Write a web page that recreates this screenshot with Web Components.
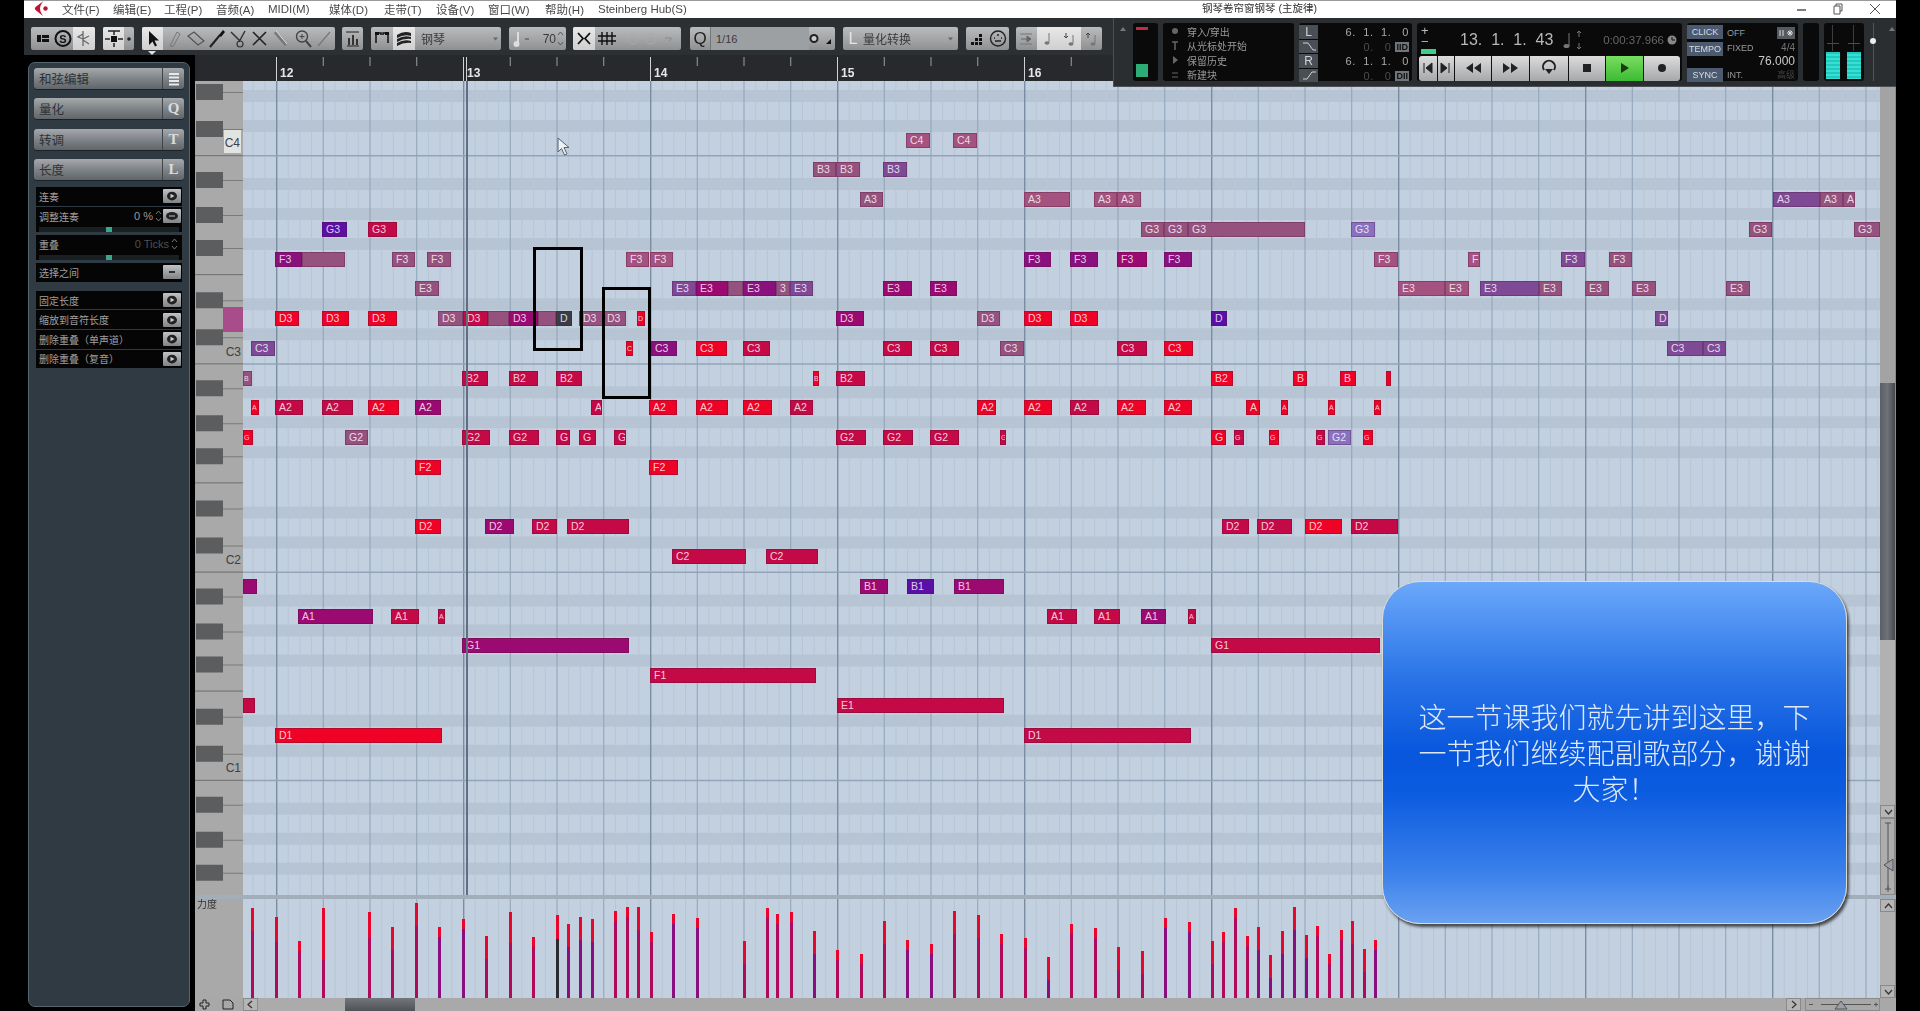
<!DOCTYPE html>
<html lang="zh">
<head>
<meta charset="utf-8">
<title>钢琴卷帘窗</title>
<style>
  html, body { margin: 0; height: 100%; background: #000; overflow: hidden; }
  body { font-family: "Liberation Sans", "Noto Sans CJK SC", sans-serif; }
</style>
</head>
<body>
<daw-window>
  <title-bar slot="title"></title-bar>
  <tool-bar slot="tools"></tool-bar>
  <transport-panel slot="transport"></transport-panel>
  <side-panel slot="side"></side-panel>
  <key-editor slot="editor"></key-editor>
</daw-window>
<call-out>这一节课我们就先讲到这里，下一节我们继续配副歌部分，谢谢大家！</call-out>

<script>
const FONT = '"Liberation Sans", "Noto Sans CJK SC", sans-serif';

// grid geometry, in page pixels
const GRID_X = 243, GRID_W = 1637, ROLL_Y = 81, ROLL_H = 814;
const BAR12 = 276, BEAT = 46.75, OCTAVE = 208.25;

class DawWindow extends HTMLElement {
  constructor() {
    super();
    this.attachShadow({ mode: 'open' }).innerHTML = `
      <style>
        :host {
          display: grid;
          width: 1872px;
          height: 1011px;
          margin-left: 24px;
          grid-template-columns: 171px 1fr;
          grid-template-rows: 18px 37px 1fr;
          filter: blur(.4px);
        }
        ::slotted([slot=title]) { grid-column: 1 / 3; grid-row: 1; }
        ::slotted([slot=tools]) { grid-column: 1 / 3; grid-row: 2; }
        ::slotted([slot=transport]) { grid-column: 1 / 3; grid-row: 2 / 4; justify-self: end; align-self: start; z-index: 5; position: relative; }
        ::slotted([slot=side]) { grid-column: 1; grid-row: 3; }
        ::slotted([slot=editor]) { grid-column: 2; grid-row: 3; }
      </style>
      <slot name="title"></slot><slot name="tools"></slot><slot name="side"></slot><slot name="editor"></slot><slot name="transport"></slot>`;
  }
}

class TitleBar extends HTMLElement {
  constructor() {
    super();
    const menus = [['文件(F)', 51], ['编辑(E)', 51], ['工程(P)', 52], ['音频(A)', 52], ['MIDI(M)', 61], ['媒体(D)', 55], ['走带(T)', 52], ['设备(V)', 52], ['窗口(W)', 57], ['帮助(H)', 53], ['Steinberg Hub(S)', 120]];
    this.attachShadow({ mode: 'open' }).innerHTML = `
      <style>
        :host { display: flex; align-items: center; height: 18px; box-sizing: border-box; padding-bottom: 2px; background: #fff; border-top: 1px solid #9a9a9a; font: 11.5px ${FONT}; color: #4a4a4a; position: relative; }
        .logo { width: 38px; padding-left: 10px; box-sizing: border-box; display: flex; }
        span { white-space: nowrap; }
        .title { position: absolute; left: 1178px; top: 0; font-size: 10.5px; line-height: 15px; color: #333; }
        .win { margin-left: auto; display: flex; gap: 26px; padding-right: 15px; align-items: center; }
        svg { display: block; }
      </style>
      <div class="logo"><svg width="15" height="15" viewBox="0 0 15 15"><path d="M9.500 0 L1.500 6 Q0 7.500 1.500 9 L9 15 Q6 10.500 6 7.500 Q6 4 9.500 0Z" fill="#c01235"/><circle cx="11.500" cy="7.500" r="2.200" fill="#c01235"/></svg></div>
      ${menus.map(m => `<span style="width:${m[1]}px">${m[0]}</span>`).join('')}
      <span class="title">钢琴卷帘窗钢琴 (主旋律)</span>
      <div class="win">
        <svg width="10" height="10"><path d="M0 6H9" stroke="#555" stroke-width="1.500"/></svg>
        <svg width="10" height="12"><path d="M1 3H7V11H1Z M3 3V1H9V8H7" fill="none" stroke="#555"/></svg>
        <svg width="12" height="12"><path d="M1 1L11 11M11 1L1 11" stroke="#555"/></svg>
      </div>`;
  }
}

// one cell of a toolbar group
function cell(w, inner, light) {
  return `<i class="c${light ? ' on' : ''}" style="width:${w}px"><svg width="${w}" height="23" viewBox="0 0 ${w} 23">${inner}</svg></i>`;
}
const caret = x => `<path d="M${x} 10.500h5l-2.500 3z" fill="#666"/>`;

class ToolBar extends HTMLElement {
  constructor() {
    super();
    const groups = [
      [64, cell(22, '<rect x="6" y="8" width="4" height="7" fill="#111"/><rect x="11" y="8" width="7" height="3" fill="#111"/><rect x="11" y="12" width="7" height="3" fill="#111"/>')
        + cell(20, '<circle cx="10" cy="11.500" r="7.500" fill="none" stroke="#111" stroke-width="2"/><text x="10" y="15.500" font-size="11" font-weight="700" text-anchor="middle" fill="#111">S</text>')
        + cell(22, '<path d="M10 4V19M10 7L5 10L10 12M10 12L16 9M10 13L16 17" fill="none" stroke="#666" stroke-width="1.300"/>', 1)],
      [31, cell(21, '<rect x="8" y="9" width="6" height="6" fill="#111"/><path d="M5 4H17M11 4V8M2 12H7M15 12H20M11 16V20" stroke="#222" stroke-width="1.500"/>', 1) + cell(10, '<circle cx="5" cy="12" r="1.800" fill="#222"/>')],
      [193, cell(21, '<path d="M7 4V18L10.500 14.500L13 19.500L15 18.500L12.500 13.500H17Z" fill="#111"/>', 1)
        + cell(21.5, '<path d="M7 19L14 5L17 7L10 19.500Z" fill="none" stroke="#777"/>')
        + cell(21.5, '<path d="M3 9L9 5L19 14L13 18Z" fill="none" stroke="#555" stroke-width="1.200"/>')
        + cell(21.5, '<path d="M4 20L14 8" stroke="#222" stroke-width="2"/><path d="M13 8L17 3L19 5L15 10Z" fill="#111"/>')
        + cell(21.5, '<path d="M3 5L12 14M17 4L11 15" stroke="#333" stroke-width="1.500"/><circle cx="12" cy="17" r="3" fill="none" stroke="#333" stroke-width="1.200"/>')
        + cell(21.5, '<path d="M4 5L17 18M17 5L4 18" stroke="#222" stroke-width="1.600"/>')
        + cell(21.5, '<path d="M4 5L15 18" stroke="#777" stroke-width="3"/><path d="M5 4L16 17" stroke="#ddd" stroke-width="1"/>')
        + cell(21.5, '<circle cx="10" cy="9.500" r="5.500" fill="none" stroke="#444" stroke-width="1.400"/><path d="M14 14L19 20" stroke="#444" stroke-width="2"/><path d="M7.500 9.500h5M10 7v5" stroke="#444"/>')
        + cell(20, '<path d="M4 19L16 5" stroke="#777" stroke-width="1.200"/>')],
      [21, cell(21, '<path d="M4 5H17M5 19H17" stroke="#222"/><path d="M6 18V11H8V18ZM10 18V8H12V18ZM14 18V12H16V18Z" fill="#333"/>')],
      [130, cell(22, '<path d="M5 16V6H10V8M12 8V6H17V16" fill="none" stroke="#111" stroke-width="1.500"/><rect x="4" y="5" width="4" height="3" fill="#111"/><rect x="14" y="5" width="4" height="3" fill="#111"/>')
        + cell(22, '<path d="M4 8Q11 3 18 6V9Q11 7 4 11ZM4 12Q11 8 18 10V12Q11 11 4 15ZM4 16Q11 12 18 14V16Q11 15 4 19Z" fill="#222"/>', 1)
        + `<b class="t" style="width:76px;padding-left:6px">钢琴</b>` + cell(10, caret(2))],
      [57, cell(22, '<path d="M9 5V16" stroke="#ddd" stroke-width="2"/><circle cx="7.500" cy="17" r="3" fill="#ddd"/><path d="M16 12h4" stroke="#666" stroke-width="1.500"/>')
        + `<b class="t" style="width:25px;justify-content:flex-end">70</b>` + cell(10, '<path d="M2 8L4.500 5L7 8M2 15L4.500 18L7 15" fill="none" stroke="#555"/>')],
      [108, cell(22, '<path d="M5 6L10 11.500L5 17M17 6L12 11.500L17 17" fill="none" stroke="#111" stroke-width="1.800"/>', 1)
        + cell(24, '<path d="M7 5V18M12 5V18M17 5V18M3 9H21M3 14H21" stroke="#111" stroke-width="1.400"/>')
        + cell(62, '<circle cx="14" cy="12" r="5" fill="none" stroke="#aaa"/><circle cx="32" cy="12" r="5" fill="none" stroke="#aaa"/><path d="M46 11h6M50 14l3-3" stroke="#888"/>')],
      [145, cell(20, '<text x="10" y="17" font-size="17" text-anchor="middle" fill="#222">Q</text>')
        + `<b class="t" style="width:99px;border-left:1px solid #777;padding-left:5px;background:#9da0a3;font-size:11px">1/16</b>`
        + cell(14, '<circle cx="5" cy="11.500" r="4.500" fill="#222"/><circle cx="5" cy="11.500" r="2.500" fill="#ccc"/>')
        + cell(12, '<path d="M8 17h-5l5 -5z" fill="#111"/>')],
      [115, cell(20, '<text x="10" y="17" font-size="16" text-anchor="middle" fill="#e4e4e4">L</text>') + `<b class="t" style="width:84px;font-size:12px">量化转换</b>` + cell(10, caret(1))],
      [43, cell(21, '<path d="M13 15h3v3h-3zM9 15h3v3h-3zM5 15h3v3h-3zM9 11h3v3h-3zM13 11h3v3h-3zM13 7h3v3h-3z" fill="#111"/>') + cell(22, '<circle cx="11" cy="11.500" r="7.500" fill="none" stroke="#222" stroke-width="1.400"/><path d="M7 11h1M10 8h2M14 11h1M8 14h6" stroke="#222" stroke-width="1.400"/>')],
      [86, cell(21, '<path d="M4 7h12M4 17h12" stroke="#777" stroke-width="1.200"/><path d="M5 12h8M11 9l4 3-4 3z" stroke="#666" fill="#666"/>')
        + cell(22, '<path d="M12 6V15" stroke="#777"/><ellipse cx="10" cy="16" rx="2.500" ry="1.800" fill="#777"/>', 1)
        + cell(22, '<path d="M14 8V16" stroke="#777"/><ellipse cx="12" cy="17" rx="2.500" ry="1.800" fill="#777"/><path d="M7 6v5M5 9l2 2 2-2" fill="none" stroke="#444"/>', 1)
        + cell(21, '<path d="M14 8V16" stroke="#777"/><ellipse cx="12" cy="17" rx="2.500" ry="1.800" fill="#777"/><path d="M7 11V6M5 8l2-2 2 2" fill="none" stroke="#444"/>')],
    ];
    const gaps = [8, 8, 7, 8, 8, 7, 9, 8, 8, 7];
    this.attachShadow({ mode: 'open' }).innerHTML = `
      <style>
        :host { display: flex; align-items: flex-start; box-sizing: border-box; height: 37px; padding: 9px 0 0 7px; background: #2d3033; font: 12px ${FONT}; position: relative; }
        .g { display: flex; height: 23px; border-radius: 2px; overflow: hidden; background: linear-gradient(#b9bbbd, #a2a4a6 55%, #8e9092); flex: none; }
        .c { display: block; flex: none; font-style: normal; }
        .c.on { background: linear-gradient(#e8e8e8, #cfcfcf); }
        svg { display: block; font-family: ${FONT}; }
        .t { display: flex; align-items: center; box-sizing: border-box; flex: none; font-weight: 400; color: #3a3a3a; white-space: nowrap; }
        .mark { position: absolute; left: 124px; top: 33px; width: 0; height: 0; border: 4px solid transparent; border-top: 4px solid #ddd; border-bottom: 0; }
      </style>
      ${groups.map((g, i) => `<div class="g" style="width:${g[0]}px;margin-right:${gaps[i] || 0}px">${g[1]}</div>`).join('')}
      <div class="mark"></div>`;
  }
}

class TransportPanel extends HTMLElement {
  constructor() {
    super();
    const play = [
      [18, '<path d="M5 7V17M13 7V17L7 12Z" stroke="#222" fill="#222"/>'],
      [16, '<path d="M3 7L9 12L3 17ZM11 7V17" stroke="#222" fill="#222"/>'],
      [36, '<path d="M18 7V17L11 12ZM26 7V17L19 12Z" fill="#222"/>'],
      [37, '<path d="M11 7V17L18 12ZM19 7V17L26 12Z" fill="#222"/>'],
      [38, '<path d="M14 14A6 6 0 1 1 24 14" fill="none" stroke="#222" stroke-width="2"/><path d="M15 13H23L19 18Z" fill="#222"/>'],
      [36, '<rect x="14" y="8" width="8" height="8" fill="#222"/>'],
      [37, '<path d="M15 7L23 12L15 17Z" fill="#1a3a12"/>', 1],
      [36, '<circle cx="18" cy="12" r="4" fill="#222"/>'],
    ];
    const upArrow = '<svg width="10" height="8"><path d="M2 6L5 2L8 6Z" fill="#777"/></svg>';
    const modeIcon = d => `<svg width="24" height="14">${d}</svg>`;
    this.attachShadow({ mode: 'open' }).innerHTML = `
      <style>
        :host { display: flex; box-sizing: border-box; width: 783px; height: 69px; padding: 5px 0 5px 4px; gap: 5px; background: #2b2e31; border-left: 1px solid #4c5054; border-bottom: 1px solid #4c5054; font: 10px ${FONT}; color: #999; }
        .box { background: #0a0a0b; border-radius: 3px; box-sizing: border-box; flex: none; }
        .up { width: 10px; flex: none; padding-top: 2px; }
        .meter { width: 25px; padding: 4px 3px; display: flex; flex-direction: column; justify-content: space-between; }
        .meter u { display: block; width: 12px; background: #c42a44; height: 3px; }
        .meter u + u { height: 13px; background: #2eac78; }
        .modes { width: 131px; display: grid; grid-template-columns: 24px 1fr; grid-auto-rows: 14.5px; align-items: center; padding-top: 1px; }
        .loc { width: 113px; display: grid; grid-template-columns: 19px 1fr; grid-auto-rows: 14.5px; padding-top: 2px; }
        .loc b { font-weight: 400; display: flex; align-items: center; justify-content: center; background: #4a4f55; color: #cfd3d6; margin: 0 0 1px; font-size: 12px; }
        .loc span { display: flex; justify-content: flex-end; align-items: center; padding-right: 3px; color: #aaa; font-size: 11px; white-space: pre; letter-spacing: .6px; }
        .loc .dim { color: #4c4c4c; }
        .loc .dim i { font-style: normal; font-size: 9px; font-weight: 700; background: #70757a; color: #111; padding: 0 1px; margin-left: 4px; letter-spacing: 0; }
        .time { width: 265px; display: flex; flex-direction: column; }
        .clock { height: 33px; display: flex; align-items: center; color: #b8b8b8; position: relative; }
        .pm { width: 24px; padding-left: 4px; font-size: 13px; line-height: 11px; color: #bbb; box-sizing: border-box; }
        .pm u { display: block; width: 15px; height: 5px; background: #3bd08a; margin-top: 2px; }
        .big { font-size: 16px; margin-left: 19px; white-space: pre; }
        .real { margin-left: auto; padding-right: 5px; font-size: 11.500px; color: #666; display: flex; gap: 3px; align-items: center; }
        .btns { display: flex; height: 25px; margin: 0 2px; background: #111; border-radius: 3px; overflow: hidden; gap: 1px; }
        .btns i { background: linear-gradient(#dcdcdc, #a6a8aa); display: block; }
        .btns i.go { background: linear-gradient(#79dd62, #3dbb33); }
        svg { display: block; }
        .sync { width: 111px; display: grid; grid-template-columns: 36px 1fr; grid-template-rows: 17px 13px 13px 15px; padding: 1px 0; font-size: 9px; }
        .sync b { font-weight: 400; background: #4c5a70; color: #d8dde2; display: flex; align-items: center; justify-content: center; height: 14px; margin-top: 1px; }
        .sync span { padding-left: 4px; display: flex; align-items: center; color: #999; }
        .sync .r { justify-content: flex-end; padding-right: 3px; }
        .empty { width: 16px; }
        .vu { width: 40px; display: flex; justify-content: center; gap: 7px; padding: 0 2px 2px 0; background: #0a0a0b; }
        .vu div { width: 14px; display: flex; flex-direction: column; justify-content: flex-end; position: relative; }
        .vu div::before { content: ""; position: absolute; left: 6px; top: 2px; bottom: 28px; width: 1px; background: #3a3e42; }
        .vu div::after { content: ""; position: absolute; left: 1px; right: 1px; top: 20px; height: 1px; background: #4a4e52; }
        .vu u { display: block; height: 27px; background: repeating-linear-gradient(#1fc9c0 0 2px, #36dfd2 2px 4px); }
        .fader { width: 8px; flex: none; position: relative; display: flex; justify-content: center; }
        .fader::before { content: ""; width: 1px; background: #555; }
        .fader::after { content: ""; position: absolute; top: 15px; width: 6px; height: 6px; border-radius: 50%; background: #eee; }
        .top { margin-left: 5px; }
      </style>
      <div class="up">${upArrow}</div>
      <div class="box meter"><u></u><u></u></div>
      <div class="box modes">
        ${modeIcon('<circle cx="12" cy="7" r="3" fill="#666"/>')}<span>穿入/穿出</span>
        ${modeIcon('<path d="M9 3H15M12 3V11" stroke="#666" stroke-width="1.500"/>')}<span>从光标处开始</span>
        ${modeIcon('<path d="M10 3L15 7L10 11Z" fill="#666"/>')}<span>保留历史</span>
        ${modeIcon('<path d="M9 5H15M9 9H15" stroke="#666"/>')}<span>新建块</span>
      </div>
      <div class="box loc">
        <b>L</b><span>6.  1.  1.   0</span>
        <b><svg width="16" height="12"><path d="M2 3H7L12 10H15" fill="none" stroke="#cfd3d6"/></svg></b><span class="dim">0.   0<i>IID</i></span>
        <b>R</b><span>6.  1.  1.   0</span>
        <b><svg width="16" height="12"><path d="M2 10H6L11 3H15" fill="none" stroke="#cfd3d6"/></svg></b><span class="dim">0.   0<i>DII</i></span>
      </div>
      <div class="box time">
        <div class="clock">
          <div class="pm">+<br>−<u></u></div>
          <span class="big">13.  1.  1.  43</span>
          <svg width="28" height="24" style="margin-left:5px"><path d="M11 5V18" stroke="#777"/><ellipse cx="8.500" cy="18" rx="3" ry="2" fill="#777"/><path d="M21 3V9M21 15V21M19 5l2-2 2 2M19 19l2 2 2-2" fill="none" stroke="#777"/></svg>
          <span class="real">0:00:37.966 <svg width="10" height="10"><circle cx="5" cy="5" r="4.500" fill="#888"/><path d="M5 2V5H8" stroke="#111" fill="none"/></svg></span>
        </div>
        <div class="btns">${play.map(p => `<i class="${p[2] ? 'go' : ''}" style="width:${p[0]}px"><svg width="${p[0]}" height="25" viewBox="0 0 ${p[0]} 25">${p[1]}</svg></i>`).join('')}</div>
      </div>
      <div class="box sync">
        <b>CLICK</b><span style="justify-content:space-between;padding-right:3px">OFF<svg width="18" height="12"><rect width="18" height="12" fill="#555a60"/><path d="M3 3V9M6 3V9M10 6H16M13 3V9M11 4L15 8M15 4L11 8" stroke="#ddd"/></svg></span>
        <b>TEMPO</b><span style="justify-content:space-between;padding-right:3px">FIXED<i style="font-style:normal;color:#777;font-size:10px">4/4</i></span>
        <i></i><span class="r" style="color:#c8c8c8;font-size:12px">76.000</span>
        <b>SYNC</b><span style="justify-content:space-between;padding-right:3px">INT.<i style="font-style:normal;color:#444">高级</i></span>
      </div>
      <div class="box empty"></div>
      <div class="box vu"><div><u></u></div><div><u></u></div></div>
      <div class="fader"></div>
      <div class="up top">${upArrow}</div>`;
  }
}

class SideButton extends HTMLElement {
  constructor() {
    super();
    const key = this.getAttribute('key');
    const stack = '<svg width="12" height="14"><path d="M1 2H11M1 5.500H11M1 9H11M1 12.500H11" stroke="#e6e8ea" stroke-width="2"/></svg>';
    this.attachShadow({ mode: 'open' }).innerHTML = `
      <style>
        :host { display: flex; height: 21px; margin-bottom: 9.250px; border-radius: 3px; overflow: hidden; background: linear-gradient(#a5a9ac, #7f8488 50%, #60656a); color: #2d3135; font-size: 12.500px; box-shadow: 0 1px 0 #1c2125; }
        div { flex: 1; display: flex; align-items: center; padding-left: 5px; }
        b { width: 21px; border-left: 1px solid #3f4448; display: flex; align-items: center; justify-content: center; font: 700 15px "Liberation Serif", serif; color: #d9dcde; }
      </style>
      <div><slot></slot></div><b>${key || stack}</b>`;
  }
}

class SideRow extends HTMLElement {
  constructor() {
    super();
    const btn = this.getAttribute('btn');
    const glyph = btn === 'minus' ? '<rect x="6" y="7" width="6" height="2" fill="#222"/>'
      : btn === 'plus' ? '<ellipse cx="9" cy="8" rx="6" ry="4.500" fill="#222"/><path d="M6 8H12" stroke="#ccc"/>'
      : '<circle cx="9" cy="8" r="5" fill="#222"/><path d="M7.500 5.500L11.500 8L7.500 10.500Z" fill="#ccc"/>';
    const val = this.getAttribute('val');
    const slider = this.hasAttribute('slider');
    this.attachShadow({ mode: 'open' }).innerHTML = `
      <style>
        :host { display: block; background: #050505; color: #a0a0a0; font-size: 10px; margin-bottom: 1px; position: relative; }
        .line { display: flex; align-items: center; height: var(--row, 19px); padding-left: 3px; }
        .label { flex: 1; white-space: nowrap; }
        .val { color: ${btn ? '#9a9a9a' : '#505050'}; font-size: 11px; margin-right: 1px; white-space: nowrap; }
        .btn { width: 18px; height: 14px; margin-right: 1px; background: linear-gradient(#c0c2c4, #808487); border-radius: 1px; }
        .btn.none { width: 2px; background: none; }
        svg { display: block; }
        .slide { height: 5px; margin: 1px 3px 3px; background: #1a2022; display: flex; justify-content: center; }
        .slide u { display: block; width: 6px; background: #3da58a; }
      </style>
      <div class="line"><span class="label"><slot></slot></span>
        ${val ? `<span class="val">${val}</span><svg width="9" height="14"><path d="M2 5L4.500 2L7 5M2 9L4.500 12L7 9" fill="none" stroke="#777"/></svg>` : ''}
        <div class="btn ${btn ? '' : 'none'}">${btn ? `<svg width="18" height="14" viewBox="0 0 18 16" preserveAspectRatio="none">${glyph}</svg>` : ''}</div>
      </div>
      ${slider ? '<div class="slide"><u></u></div>' : ''}`;
  }
}

class SidePanel extends HTMLElement {
  constructor() {
    super();
    this.attachShadow({ mode: 'open' }).innerHTML = `
      <style>
        :host { display: block; box-sizing: border-box; height: 956px; padding: 7px 5px 4px 4px; background: #000; font: 10px ${FONT}; }
        .panel { box-sizing: border-box; height: 100%; padding: 5px 5px 0; background: #2f3a42; border: 1px solid #56656e; border-radius: 7px; }
        .block { margin: 0 2px; }
        .block + .block { margin-top: 9px; --row: 18.6px; }
        side-button:nth-of-type(4) { margin-bottom: 7px; }
      </style>
      <div class="panel">
        <side-button>和弦编辑</side-button>
        <side-button key="Q">量化</side-button>
        <side-button key="T">转调</side-button>
        <side-button key="L">长度</side-button>
        <div class="block">
          <side-row btn="play">连奏</side-row>
          <side-row btn="plus" val="0 %" slider>调整连奏</side-row>
          <side-row val="0 Ticks" slider>重叠</side-row>
          <side-row btn="minus">选择之间</side-row>
        </div>
        <div class="block">
          <side-row btn="play">固定长度</side-row>
          <side-row btn="play">缩放到音符长度</side-row>
          <side-row btn="play">删除重叠（单声道）</side-row>
          <side-row btn="play">删除重叠（复音）</side-row>
        </div>
      </div>`;
  }
}

// vertical grid lines shared by the note area and the velocity lane
function gridLines(h) {
  let out = '';
  for (let x = BAR12 - GRID_X - BEAT; x < GRID_W; x += BEAT / 4) {
    const i = Math.round((x - (BAR12 - GRID_X)) / (BEAT / 4));
    const bar = ((i % 16) + 16) % 16 === 0, beat = ((i % 4) + 4) % 4 === 0;
    if (x < 0) continue;
    const col = bar ? '#7a8da3' : beat ? '#8fa1b5' : '#b7c5d5';
    out += `<rect x="${x.toFixed(2)}" y="0" width="${bar ? 1.4 : 1}" height="${h}" fill="${col}"/>`;
  }
  return out;
}

const NOTE_COL = {
  r: '#ee0226', c: '#c40a46', m: '#9b0a70', p: '#8a107e', v: '#5c0fa4',
  u: '#96527f', q: '#a4527f', w: '#7e4a96', l: '#8a70c0', k: '#3b3d45',
};
const ROW_NAMES = ['C4', 'B3', 'A3', 'G3', 'F3', 'E3', 'D3', 'C3', 'B2', 'A2', 'G2', 'F2', 'E2', 'D2', 'C2', 'B1', 'A1', 'G1', 'F1', 'E1', 'D1'];
// start-end + colour; "_" means no label, "~" shows only the octave digit
const NOTES = [
  '906-930q 953-977q',
  '813-836u 836-860u 883-907w',
  '860-883u 1024-1070q 1094-1117q 1117-1141q 1773-1820w 1820-1843u 1843-1855u',
  '322-347v 368-397c 1141-1164u 1164-1188u 1188-1305u 1351-1375l 1749-1772u 1854-1880u',
  '275-302p 302-345u_ 392-415u 427-451u 626-649q 650-673q 1024-1051p 1070-1098p 1117-1147m 1164-1192p 1374-1398q 1468-1480q 1561-1585w 1609-1632u',
  '415-439u 672-696w 696-728m 728-743u_ 743-776p 776-790u~ 790-813w 883-912m 930-957m 1398-1445q 1445-1469q 1480-1539w 1539-1562u 1585-1609u 1632-1656u 1726-1750u',
  '275-299r 322-349r 368-397r 438-463u 463-488c 488-509u_ 509-538m 538-556u_ 556-572k 579-603u 603-626u 637-645r 836-864m 977-1000u 1024-1052r 1070-1098r 1211-1227v 1655-1668w',
  '251-275w 626-633r 651-677p 696-727r 743-770c 883-912c 930-959c 1000-1024u 1117-1147c 1164-1193r 1667-1703w 1703-1726w',
  '243-252u 462-488c 509-538c 556-582c 813-819r 836-865c 1211-1233r 1293-1307r 1340-1356r 1386-1391r',
  '251-259r 275-303c 322-353c 368-399r 415-441m 591-602c 649-677r 696-728r 743-772r 790-813c 977-996r 1024-1052r 1070-1099c 1117-1146r 1164-1192r 1246-1260r 1281-1288r 1328-1335r 1374-1381r',
  '243-253r 345-368u 462-490c 509-539c 556-570c 579-596c 614-626c 836-866c 883-913c 930-959c 1000-1006c 1211-1226r 1234-1244c 1269-1279r 1316-1325c 1328-1351l 1363-1373r',
  '415-441r 649-678r',
  '',
  '415-441r 485-514m 532-557c 567-629c 1222-1249c 1257-1292c 1305-1342r 1351-1398c',
  '672-746c 766-818c',
  '243-257m_ 860-888m 907-934v 954-1004m',
  '298-373m 391-419c 438-445c 1047-1077c 1094-1120c 1141-1166m 1188-1196c',
  '462-629m 1211-1380c',
  '650-816c',
  '243-255c_ 837-1004c',
  '275-442r 1024-1191c',
];

class NoteBlock extends HTMLElement {
  constructor() {
    super();
    const c = NOTE_COL[this.getAttribute('c')];
    const tiny = this.hasAttribute('tiny');
    this.attachShadow({ mode: 'open' }).innerHTML = `
      <style>
        :host { display: block; position: absolute; box-sizing: border-box; height: 15px; overflow: hidden; padding-left: ${tiny ? 0 : 3}px; background: ${c}; border: 1px solid rgba(70,20,50,.3); font: ${tiny ? 7 : 10.5}px/13px "Liberation Sans", sans-serif; color: rgba(255,255,255,.8); white-space: nowrap; }
      </style><slot></slot>`;
  }
}

// what fits of a note's name in a block of this width
function noteLabel(name, w, flag) {
  if (flag === '_') return '';
  if (flag === '~') return name[1];
  if (w >= 18) return name;
  return w >= 6 ? name[0] : '';
}

class NoteGrid extends HTMLElement {
  constructor() {
    super();
    let bands = '', lines = '';
    for (let k = -1; k < 5; k++) {
      for (const y of [96, 126, 184, 214, 244]) {
        bands += `<rect x="0" y="${y + k * OCTAVE - ROLL_Y - 6}" width="${GRID_W}" height="12" fill="#b7c4d4"/>`;
      }
      lines += `<rect x="0" y="${155 + k * OCTAVE - ROLL_Y}" width="${GRID_W}" height="1.500" fill="#93a4b8"/>`;
    }
    let notes = '';
    NOTES.forEach((row, n) => {
      row.split(' ').filter(Boolean).forEach(tok => {
        const m = tok.match(/(\d+)-(\d+)([a-z])([_~]?)/);
        const left = m[1] - GRID_X, w = m[2] - m[1], top = 140 + n * 29.75 - 7.5 - ROLL_Y;
        notes += `<note-block c="${m[3]}" ${w < 11 ? 'tiny' : ''} style="left:${left}px;top:${top}px;width:${w}px">${noteLabel(ROW_NAMES[n], w, m[4])}</note-block>`;
      });
    });
    this.attachShadow({ mode: 'open' }).innerHTML = `
      <style>
        :host { display: block; position: relative; width: ${GRID_W}px; height: ${ROLL_H}px; overflow: hidden; background: #c3d0e0; }
        svg { display: block; position: absolute; left: 0; top: 0; }
        .head { position: absolute; top: 0; bottom: 0; width: 1.500px; background: #5f6f80; }
        .mark { position: absolute; box-sizing: border-box; border: 3px solid #000; }
      </style>
      <svg width="${GRID_W}" height="${ROLL_H}">${bands}${gridLines(ROLL_H)}${lines}</svg>
      ${notes}
      <div class="head" style="left:${466 - GRID_X}px"></div>
      <div class="mark" style="left:${533 - GRID_X}px;top:${247 - ROLL_Y}px;width:50px;height:104px"></div>
      <div class="mark" style="left:${602 - GRID_X}px;top:${287 - ROLL_Y}px;width:49px;height:112px"></div>
      <svg style="left:${557 - GRID_X}px;top:${137 - ROLL_Y}px" width="14" height="20" viewBox="0 0 14 20"><path d="M1 1V15L4.500 11.500L7.500 18L10 17L7 10.500H12Z" fill="#eef1f5" stroke="#59616b"/></svg>`;
  }
}

class PianoKeys extends HTMLElement {
  constructor() {
    super();
    let out = '';
    for (let k = -1; k < 5; k++) {
      for (const y of [92, 129, 180, 215, 248]) {
        const c = y + k * OCTAVE;
        out += `<rect x="28" y="${c - ROLL_Y}" width="20" height="1" fill="#7b7b7b"/><rect x="1" y="${c - 8 - ROLL_Y}" width="27" height="16" fill="#5c5d5f"/>`;
      }
      out += `<rect x="0" y="${155 + k * OCTAVE - ROLL_Y}" width="48" height="1.200" fill="#777"/><rect x="0" y="${274 + k * OCTAVE - ROLL_Y}" width="48" height="1.200" fill="#777"/>`;
    }
    this.attachShadow({ mode: 'open' }).innerHTML = `
      <style>
        :host { display: block; position: relative; width: 48px; height: ${ROLL_H}px; overflow: hidden; background: #a9a9a9; }
        svg { display: block; }
        .sel { position: absolute; left: 28px; top: ${307 - ROLL_Y}px; width: 20px; height: 25px; background: #a84d8a; }
        .lab { position: absolute; right: 2px; font: 12px/14px ${FONT}; color: #3d4045; }
        .c4 { top: ${130 - ROLL_Y}px; padding: 6px 1px 3px; background: #e2e4e2; }
      </style>
      <svg width="48" height="${ROLL_H}">${out}</svg>
      <div class="sel"></div>
      <span class="lab c4">C4</span>
      <span class="lab" style="top:${345 - ROLL_Y}px">C3</span>
      <span class="lab" style="top:${553 - ROLL_Y}px">C2</span>
      <span class="lab" style="top:${761 - ROLL_Y}px">C1</span>`;
  }
}

class VelocityLane extends HTMLElement {
  constructor() {
    super();
    // tops read off the left part of the lane, the rest are scattered alike
    const known = { 251: 908, 275: 917, 298: 941, 322: 908, 368: 912, 391: 927, 415: 903, 438: 927, 462: 919, 485: 936, 509: 912, 532: 937, 556: 915, 567: 924, 579: 917, 591: 919, 614: 911, 626: 907, 637: 907 };
    const mid = { 275: 942, 322: 960, 368: 938, 509: 943, 556: 939 };
    const xs = new Set(Object.keys(known).map(Number));
    NOTES.forEach(r => r.split(' ').filter(Boolean).forEach(t => {
      const x = parseInt(t);
      if (x >= 649 && x < 1385 && !t.includes('_') && ![...xs].some(o => Math.abs(o - x) < 5)) xs.add(x);
    }));
    let bars = '';
    [...xs].sort((a, b) => a - b).forEach(x => {
      const top = known[x] || 906 + (x * 37) % 52;
      const split = mid[x] || top + 10 + (x * 13) % 26;
      const low = x === 556 ? '#2a2a30' : x % 3 === 0 ? '#8a0f7e' : '#b00a5c';
      bars += `<rect x="${x - GRID_X}" y="${top - 899}" width="3" height="${split - top}" fill="#e8062c"/><rect x="${x - GRID_X}" y="${split - 899}" width="3" height="${998 - split}" fill="${low}"/>`;
    });
    this.attachShadow({ mode: 'open' }).innerHTML = `
      <style>
        :host { display: flex; height: 99px; }
        .name { width: 48px; box-sizing: border-box; padding-left: 2px; background: #a9a9a9; font: 10px/11px ${FONT}; color: #333; }
        svg { display: block; background: #c3d0e0; }
      </style>
      <div class="name">力度</div>
      <svg width="${GRID_W}" height="99">${gridLines(99)}${bars}</svg>`;
  }
}

class ScrollColumn extends HTMLElement {
  constructor() {
    super();
    const lane = this.hasAttribute('lane');
    const arrow = d => `<svg width="15" height="13"><path d="${d}" fill="none" stroke="#333" stroke-width="1.200"/></svg>`;
    this.attachShadow({ mode: 'open' }).innerHTML = `
      <style>
        :host { display: flex; flex-direction: column; width: 16px; flex: none; background: #a8a8a8; box-sizing: border-box; border-right: 1px solid #8a8a8a; }
        .btn { height: 13px; background: #b5b5b5; border: 1px solid #8a8a8a; box-sizing: border-box; flex: none; }
        svg { display: block; }
        .a { height: 302px; background: #a3a3a3; flex: none; }
        .th { height: 257px; background: linear-gradient(90deg, #5c6066, #6f7379 50%, #45494e); flex: none; }
        .tr { flex: 1; background: #b1b1b1; }
        .zoom { height: 77px; flex: none; background: #adadad; border: 1px solid #8a8a8a; box-sizing: border-box; }
      </style>
      ${lane
        ? `<div class="btn">${arrow('M4 8L7.500 4L11 8')}</div><div class="tr"></div><div class="btn">${arrow('M4 4L7.500 8L11 4')}</div>`
        : `<div class="a"></div><div class="th"></div><div class="tr"></div><div class="btn">${arrow('M4 4L7.500 8L11 4')}</div>
           <div class="zoom"><svg width="14" height="75"><path d="M4 4H10M7 4V70M4 70H10M7 67V73" stroke="#555"/><path d="M3 46L12 40V52Z" fill="#9aa0a5" stroke="#555"/></svg></div>`}`;
  }
}

class BottomBar extends HTMLElement {
  constructor() {
    super();
    this.attachShadow({ mode: 'open' }).innerHTML = `
      <style>
        :host { display: flex; height: 13px; background: #a8a8a8; }
        .ic { width: 48px; display: flex; gap: 12px; padding-left: 4px; box-sizing: border-box; align-items: center; flex: none; }
        .btn { width: 15px; border: 1px solid #8a8a8a; background: #b5b5b5; box-sizing: border-box; flex: none; }
        .sp { width: 87px; flex: none; background: #ababab; }
        .th { width: 70px; flex: none; background: linear-gradient(#73777c, #4f5358); }
        .tr { flex: 1; background: #a9a9a9; }
        .zm { width: 75px; margin-left: 4px; flex: none; border: 1px solid #8a8a8a; box-sizing: border-box; }
        svg { display: block; }
        .blank { width: 16px; flex: none; background: #a8a8a8; }
      </style>
      <div class="ic">
        <svg width="11" height="11"><path d="M4 1H7V4H10V7H7V10H4V7H1V4H4Z" fill="none" stroke="#222"/></svg>
        <svg width="12" height="11"><path d="M1 1H8L11 4V10H1Z" fill="none" stroke="#222"/></svg>
      </div>
      <div class="btn"><svg width="13" height="11"><path d="M8 2L4 5.500L8 9" fill="none" stroke="#333" stroke-width="1.200"/></svg></div>
      <div class="sp"></div><div class="th"></div><div class="tr"></div>
      <div class="btn"><svg width="13" height="11"><path d="M5 2L9 5.500L5 9" fill="none" stroke="#333" stroke-width="1.200"/></svg></div>
      <div class="zm"><svg width="73" height="11"><path d="M3 5.500H7M15 5.500H65M68 5.500H72M70 3.500V7.500" stroke="#555"/><path d="M29 10L35 2L41 10Z" fill="#9aa0a5" stroke="#555"/></svg></div>
      <div class="blank"></div>`;
  }
}

class RulerStrip extends HTMLElement {
  constructor() {
    super();
    let ticks = '';
    for (let b = 0; b < 20; b++) {
      const x = BAR12 + b * BEAT - 195;
      if (b % 4 === 0) {
        ticks += `<rect x="${x}" y="2" width="1" height="24" fill="#cfd2d5"/><text x="${x + 4}" y="22" font-size="12" font-weight="700" fill="#e8e8e8">${12 + b / 4}</text>`;
      } else {
        ticks += `<rect x="${x}" y="2" width="1" height="9" fill="#9b9ea1"/>`;
      }
    }
    this.attachShadow({ mode: 'open' }).innerHTML = `
      <style>
        :host { display: block; height: 26px; background: #27292c; }
        svg { display: block; font-family: ${FONT}; }
      </style>
      <svg width="1701" height="26">${ticks}<rect x="${466 - 195}" y="2" width="1" height="24" fill="#cfd2d5"/></svg>`;
  }
}

class KeyEditor extends HTMLElement {
  constructor() {
    super();
    this.attachShadow({ mode: 'open' }).innerHTML = `
      <style>
        :host { display: flex; flex-direction: column; height: 956px; }
        .row { display: flex; }
        .sep { height: 4px; background: #a3aebb; }
        .lane { display: flex; height: 99px; }
        velocity-lane { flex: none; }
      </style>
      <ruler-strip></ruler-strip>
      <div class="row"><piano-keys></piano-keys><note-grid></note-grid><scroll-column></scroll-column></div>
      <div class="sep"></div>
      <div class="lane"><velocity-lane></velocity-lane><scroll-column lane></scroll-column></div>
      <bottom-bar></bottom-bar>`;
  }
}

class CallOut extends HTMLElement {
  constructor() {
    super();
    this.attachShadow({ mode: 'open' }).innerHTML = `
      <style>
        :host {
          display: flex; align-items: center; justify-content: center;
          position: absolute; left: 1382px; top: 581px; width: 465px; height: 343px;
          box-sizing: border-box; padding: 0 34px 2px;
          border: 1.500px solid #dcdcd2; border-radius: 38px;
          background: linear-gradient(#6ba8fa, #2a74e8 28%, #0756dc 50%, #0c5ce0 62%, #3a80ea 85%, #6aa2f2);
          box-shadow: 2px 3px 3px rgba(30,30,30,.75);
          color: #dfe9f6; font: 300 28px/36px "Noto Sans CJK SC", sans-serif; text-align: center;
        }
      </style><div><slot></slot></div>`;
  }
}

customElements.define('note-block', NoteBlock);
customElements.define('note-grid', NoteGrid);
customElements.define('piano-keys', PianoKeys);
customElements.define('velocity-lane', VelocityLane);
customElements.define('scroll-column', ScrollColumn);
customElements.define('bottom-bar', BottomBar);
customElements.define('ruler-strip', RulerStrip);
customElements.define('key-editor', KeyEditor);
customElements.define('side-button', SideButton);
customElements.define('side-row', SideRow);
customElements.define('side-panel', SidePanel);
customElements.define('title-bar', TitleBar);
customElements.define('tool-bar', ToolBar);
customElements.define('transport-panel', TransportPanel);
customElements.define('call-out', CallOut);
customElements.define('daw-window', DawWindow);
</script>
</body>
</html>
